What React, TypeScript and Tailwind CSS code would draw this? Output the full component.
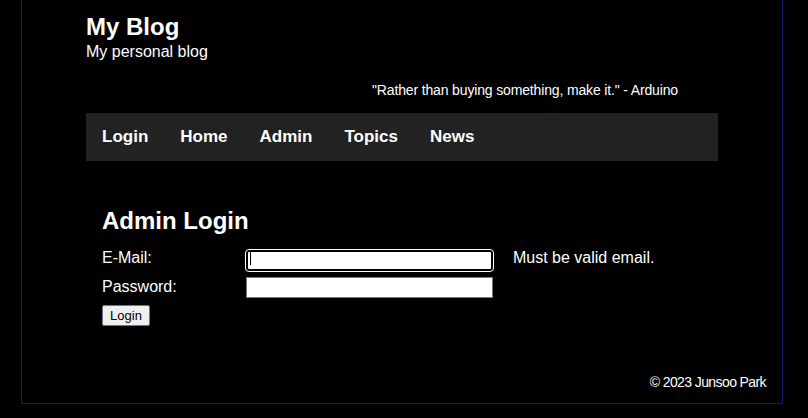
import React from "react";

const navItems = ["Login", "Home", "Admin", "Topics", "News"];

export default function App() {
  return (
    <div className="min-h-screen bg-black text-white font-['Liberation_Sans',Arial,sans-serif]">
      <div className="ml-[21px] mr-[25px] border-x border-b border-[#101c74] pt-[13px] pb-[13px]">
        <div className="px-[64px]">
          {/* header */}
          <header>
            <h1 className="text-[24px] font-bold leading-[28px]">My Blog</h1>
            <p className="mt-[2px] text-[16px] leading-[18px]">My personal blog</p>
            <p className="mt-[21px] pr-[40px] text-right text-[14px] leading-[16px] tracking-[-0.15px]">
              "Rather than buying something, make it." - Arduino
            </p>
          </header>

          {/* nav */}
          <nav className="mt-[15px] flex h-[48px] items-center bg-[#222222]">
            {navItems.map((item) => (
              <a key={item} href="#" className="px-4 text-[17px] font-bold leading-[20px] text-white">
                {item}
              </a>
            ))}
          </nav>

          {/* login form */}
          <main className="px-4 pt-[46px]">
            <h2 className="text-[24px] font-bold leading-[28px]">Admin Login</h2>
            <form className="mt-[12px]" onSubmit={(e) => e.preventDefault()}>
              <div className="grid grid-cols-[144px_247px_auto] items-start gap-y-[7px]">
                <label className="mt-[2px] text-[16px] leading-[18px]">E-Mail:</label>
                <div className="relative mt-[1px] h-[21px] w-[247px]">
                  <input
                    type="email"
                    className="h-[21px] w-[247px] rounded-[3px] border-2 border-black bg-white outline outline-1 outline-white"
                  />
                  <span className="absolute left-[4px] top-[4px] h-[13px] w-px bg-black" />
                </div>
                <span className="ml-[20px] mt-[2px] text-[16px] leading-[18px]">Must be valid email.</span>

                <label className="mt-[2px] text-[16px] leading-[18px]">Password:</label>
                <input
                  type="password"
                  className="mt-[1px] h-[21px] w-[247px] border border-[#767676] bg-white"
                />
                <span />
              </div>
              <button
                type="submit"
                className="mt-[7px] h-[21px] w-[48px] rounded-[2px] border border-[#767676] bg-[#efefef] text-[13px] leading-[16px] text-black"
              >
                Login
              </button>
            </form>
          </main>
        </div>

        {/* footer */}
        <footer className="mt-[48px] pr-4 text-right text-[14px] leading-[15px] tracking-[-0.6px]">
          © 2023 Junsoo Park
        </footer>
      </div>
    </div>
  );
}
